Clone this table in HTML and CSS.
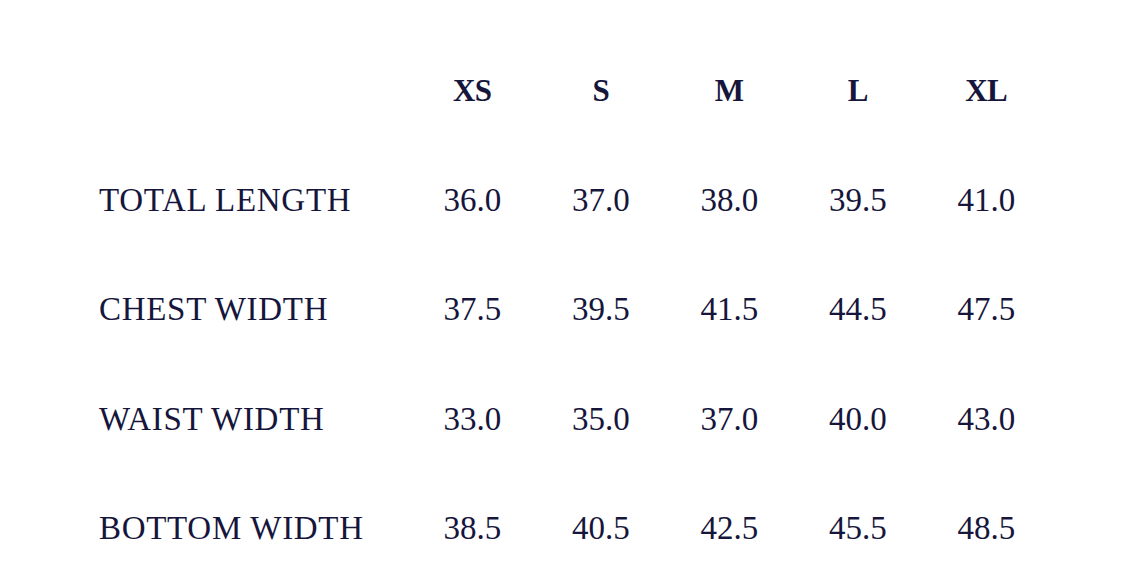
FILE: index.html
```html
<!DOCTYPE html>
<html>
<head>
<meta charset="utf-8">
<link rel="stylesheet" href="styles.css">
</head>
<body>
<div class="chart">
  <div class="cell label"></div>
  <div class="cell head">XS</div>
  <div class="cell head">S</div>
  <div class="cell head">M</div>
  <div class="cell head">L</div>
  <div class="cell head">XL</div>

  <div class="cell label">TOTAL LENGTH</div>
  <div class="cell">36.0</div>
  <div class="cell">37.0</div>
  <div class="cell">38.0</div>
  <div class="cell">39.5</div>
  <div class="cell">41.0</div>

  <div class="cell label">CHEST WIDTH</div>
  <div class="cell">37.5</div>
  <div class="cell">39.5</div>
  <div class="cell">41.5</div>
  <div class="cell">44.5</div>
  <div class="cell">47.5</div>

  <div class="cell label">WAIST WIDTH</div>
  <div class="cell">33.0</div>
  <div class="cell">35.0</div>
  <div class="cell">37.0</div>
  <div class="cell">40.0</div>
  <div class="cell">43.0</div>

  <div class="cell label">BOTTOM WIDTH</div>
  <div class="cell">38.5</div>
  <div class="cell">40.5</div>
  <div class="cell">42.5</div>
  <div class="cell">45.5</div>
  <div class="cell">48.5</div>
</div>
</body>
</html>
```
FILE: styles.css
```css
html, body {
  margin: 0;
  background: #ffffff;
}
body {
  font-family: "Liberation Serif", "Times New Roman", serif;
  color: #16163c;
  width: 1125px;
  height: 586px;
  overflow: hidden;
}
.chart {
  display: grid;
  grid-template-columns: 309px repeat(5, 128.5px);
  grid-auto-rows: 109.3px;
  padding: 36.5px 0 0 99px;
}
.cell {
  display: flex;
  align-items: center;
  justify-content: center;
  font-size: 33px;
  white-space: nowrap;
}
.label {
  justify-content: flex-start;
  letter-spacing: 0.7px;
}
.head {
  font-weight: bold;
  font-size: 31px;
  letter-spacing: -0.5px;
}
```
